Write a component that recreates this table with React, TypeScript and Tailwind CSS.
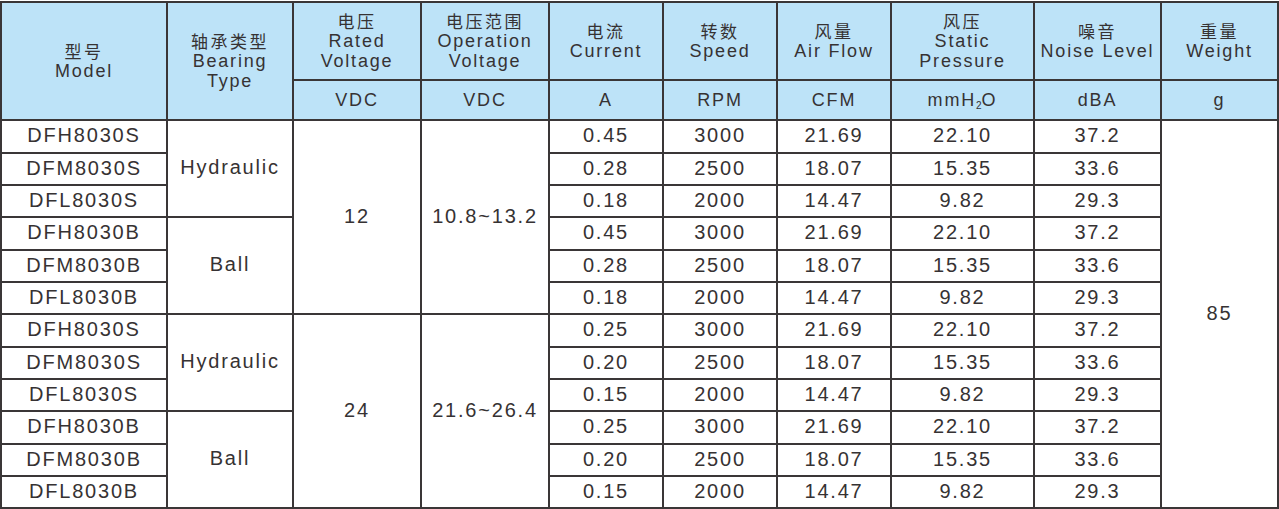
import React from 'react'

type Row = {
  model: string
  current: string
  speed: string
  flow: string
  pressure: string
  noise: string
}

const variants = [
  { current: ['0.45', '0.28', '0.18'], volt: '12', range: '10.8~13.2' },
  { current: ['0.25', '0.20', '0.15'], volt: '24', range: '21.6~26.4' }
]

const perf = [
  { speed: '3000', flow: '21.69', pressure: '22.10', noise: '37.2' },
  { speed: '2500', flow: '18.07', pressure: '15.35', noise: '33.6' },
  { speed: '2000', flow: '14.47', pressure: '9.82', noise: '29.3' }
]

const heights = [33, 32, 32, 33, 32, 32, 33, 32, 32, 33, 32, 32]

const rows: Row[] = []
variants.forEach((v) => {
  ;['S', 'B'].forEach((suffix) => {
    ;['H', 'M', 'L'].forEach((speed, i) => {
      rows.push({
        model: `DF${speed}8030${suffix}`,
        current: v.current[i],
        ...perf[i]
      })
    })
  })
})

const border = 'border-2 border-[#3a3637]'
const head = `${border} bg-[#bde3f8] text-center align-middle font-normal text-[18px] leading-[20px] tracking-[1.8px]`
const cell = `${border} text-center align-middle p-0 pb-[3px] text-[20px] leading-[24px] tracking-[1.8px]`

const zh = 'font-["Noto_Sans_CJK_SC",sans-serif] tracking-[2.5px] text-[17px]'

const App = () => {
  return (
    <div className="w-[1279px] h-[509px] bg-white pt-px font-['Liberation_Sans','Noto_Sans_CJK_SC',sans-serif] text-[#363233]">
      <table className="w-[1277px] table-fixed border-collapse">
        <colgroup>
          <col className="w-[166px]" />
          <col className="w-[126px]" />
          <col className="w-[128px]" />
          <col className="w-[128px]" />
          <col className="w-[114px]" />
          <col className="w-[114px]" />
          <col className="w-[114px]" />
          <col className="w-[143px]" />
          <col className="w-[127px]" />
          <col className="w-[117px]" />
        </colgroup>
        <thead>
          <tr className="h-[78px]">
            <th rowSpan={2} className={head}>
              <div className={zh}>型号</div>
              <div>Model</div>
            </th>
            <th rowSpan={2} className={head}>
              <div className={zh}>轴承类型</div>
              <div>Bearing</div>
              <div>Type</div>
            </th>
            <th className={head}>
              <div className={zh}>电压</div>
              <div>Rated</div>
              <div>Voltage</div>
            </th>
            <th className={head}>
              <div className={zh}>电压范围</div>
              <div>Operation</div>
              <div>Voltage</div>
            </th>
            <th className={head}>
              <div className={zh}>电流</div>
              <div>Current</div>
            </th>
            <th className={head}>
              <div className={zh}>转数</div>
              <div>Speed</div>
            </th>
            <th className={head}>
              <div className={zh}>风量</div>
              <div>Air Flow</div>
            </th>
            <th className={head}>
              <div className={zh}>风压</div>
              <div>Static</div>
              <div>Pressure</div>
            </th>
            <th className={head}>
              <div className={zh}>噪音</div>
              <div>Noise Level</div>
            </th>
            <th className={head}>
              <div className={zh}>重量</div>
              <div>Weight</div>
            </th>
          </tr>
          <tr className="h-[40px]">
            <th className={head}>VDC</th>
            <th className={head}>VDC</th>
            <th className={head}>A</th>
            <th className={head}>RPM</th>
            <th className={head}>CFM</th>
            <th className={head}>
              mmH<sub className="text-[10px] tracking-normal">2</sub>O
            </th>
            <th className={head}>dBA</th>
            <th className={head}>g</th>
          </tr>
        </thead>
        <tbody>
          {rows.map((r, i) => (
            <tr key={i} style={{ height: heights[i] }}>
              <td className={cell}>{r.model}</td>
              {i % 3 === 0 && (
                <td rowSpan={3} className={cell}>
                  {r.model.endsWith('S') ? 'Hydraulic' : 'Ball'}
                </td>
              )}
              {i % 6 === 0 && (
                <>
                  <td rowSpan={6} className={cell}>
                    {variants[i / 6].volt}
                  </td>
                  <td rowSpan={6} className={cell}>
                    {variants[i / 6].range}
                  </td>
                </>
              )}
              <td className={cell}>{r.current}</td>
              <td className={cell}>{r.speed}</td>
              <td className={cell}>{r.flow}</td>
              <td className={cell}>{r.pressure}</td>
              <td className={cell}>{r.noise}</td>
              {i === 0 && (
                <td rowSpan={12} className={cell}>
                  85
                </td>
              )}
            </tr>
          ))}
        </tbody>
      </table>
    </div>
  )
}

export default App
